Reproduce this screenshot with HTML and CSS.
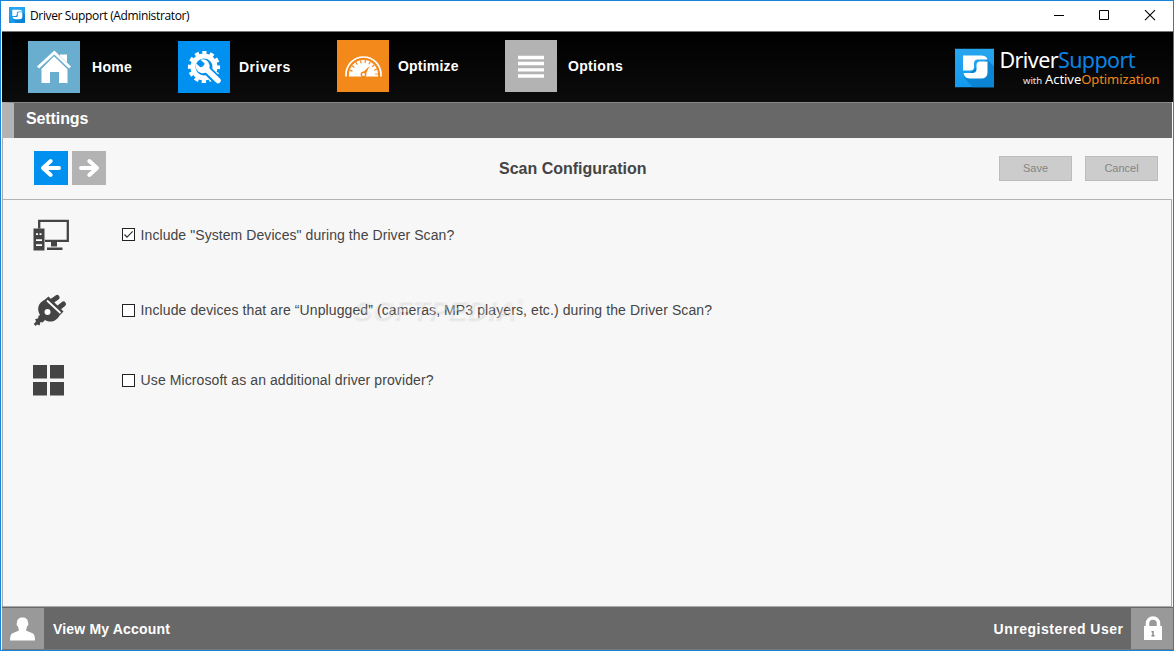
FILE: index.html
```html
<!DOCTYPE html>
<html lang="en">
<head>
<meta charset="utf-8">
<title>Driver Support</title>
<link rel="stylesheet" href="styles.css">
</head>
<body>
<svg class="defs" width="0" height="0">
  <defs>
    <linearGradient id="tile" x1="0" y1="0" x2="0" y2="1"><stop offset="0" stop-color="#28a6ee"/><stop offset="1" stop-color="#129af0"/></linearGradient>
    <symbol id="brand" viewBox="0 0 39 39">
      <rect width="39" height="39" fill="url(#tile)"/>
      <path d="M32 11 39 18V39H18L9 29Z" fill="#0b84d4"/>
      <path d="M8 7H26Q31.500 7 32.500 11H23Q19 11 19 15V18.500Q19 22 15.500 22H8Z" fill="#fff"/>
      <path d="M32.500 13V24Q32.500 30 26 30H15Q9.500 30 8.500 24.500H17.500Q21.500 24.500 21.500 20.500V16.500Q21.500 13 25 13Z" fill="#fff"/>
    </symbol>
  </defs>
</svg>
<div class="window">
  <header class="titlebar">
    <svg class="app-icon" width="16" height="16"><use href="#brand"/></svg>
    <span class="title">Driver Support (Administrator)</span>
    <svg class="controls" width="104" height="14" viewBox="0 0 104 14" fill="none" stroke="#000">
      <path d="M1 7.500H11M46.500 2.500H55.500V11.500H46.500Z"/><path d="M92 2.200 102 12.200M102 2.200 92 12.200" stroke-width="1.100"/>
    </svg>
  </header>
  <nav class="nav">
    <a class="item home"><svg class="tile" viewBox="0 0 52 52"><g fill="#fff"><path d="M32 13.500H39V25L32 18Z"/><path d="M26 15 39.500 28V42H31V31H22V42H13.500V28Z"/></g><path d="M10 27.500 26 12 42 27.500" fill="none" stroke="#69aecf" stroke-width="4.500"/><path d="M10 26.500 26.300 11.500 42 26.500" fill="none" stroke="#fff" stroke-width="3"/></svg><span>Home</span></a>
    <a class="item drivers"><svg class="tile" viewBox="0 0 52 52"><circle cx="26" cy="26" r="14.300" fill="none" stroke="#fff" stroke-width="3.600" stroke-dasharray="4.200 3.288" stroke-dashoffset="2.100"/><circle cx="26" cy="26" r="11" fill="none" stroke="#fff" stroke-width="5"/><path d="M28 28 40 40" stroke="#0090f0" stroke-width="9.500" stroke-linecap="butt"/><path d="M27 27 40 39.500" stroke="#fff" stroke-width="5.500" stroke-linecap="round"/><path d="M22.200 18.800A7 7 0 1 1 18.300 22.600L22.300 26.300 26 25.300 26.500 22.200Z" fill="#fff"/></svg><span>Drivers</span></a>
    <a class="item optimize"><svg class="tile" viewBox="0 0 52 52"><path d="M9 36.500V34.500A17.300 17.300 0 0 1 44 34.500V36.500" fill="none" stroke="#fff" stroke-width="1.700"/><path d="M12 36.500V34.500A14.500 14.500 0 0 1 41 34.500V36.500Z" fill="#fff"/><path d="M13.500 34.500A13 13 0 0 1 39.500 34.500" fill="none" stroke="#f3881b" stroke-width="3" stroke-dasharray="1.200 3.340" stroke-dashoffset="-3.300"/><path d="M24.300 34 32.500 26 28.500 35Z" fill="#f3881b"/><circle cx="26.500" cy="34.500" r="2.900" fill="#f3881b"/><circle cx="26.500" cy="34.500" r="1.500" fill="#fff"/></svg><span>Optimize</span></a>
    <a class="item options"><svg class="tile" viewBox="0 0 52 52"><path d="M13 17.500H39M13 23.500H39M13 29.800H39M13 36H39" stroke="#fff" stroke-width="3.300"/></svg><span>Options</span></a>
    <div class="logo">
      <svg width="210" height="46" viewBox="0 0 210 46"><use href="#brand" x="0" y="3.500" width="39" height="39"/>
        <text x="44.500" y="22.500" font-size="21.500" textLength="136" fill="#fff">Driver<tspan fill="#0b84e4">Support</tspan></text>
        <text x="68" y="39" font-size="9.500" textLength="19" fill="#eee">with</text>
        <text x="90" y="39" font-size="13" textLength="114.500" fill="#fff">Active<tspan fill="#f3881b">Optimization</tspan></text>
      </svg>
    </div>
  </nav>
  <div class="section"><h1>Settings</h1></div>
  <div class="toolbar">
    <div class="arrows">
      <svg class="arrow back" viewBox="0 0 34 34"><path d="M25 17H9M16.700 10 9 17 16.700 24"/></svg>
      <svg class="arrow next" viewBox="0 0 34 34"><path d="M9 17H25M17.300 10 25 17 17.300 24"/></svg>
    </div>
    <h2>Scan Configuration</h2>
    <div class="actions"><button disabled>Save</button><button disabled>Cancel</button></div>
  </div>
  <main class="content">
    <div class="row system">
      <svg class="row-icon" width="38" height="34" viewBox="0 0 38 34"><g transform="translate(0 .6)"><path d="M6.200 11V3.200H34.800V23.200H12" fill="none" stroke="#444" stroke-width="2.300"/><path d="M.500 11H11.500V33H.500ZM18 24H24V29H18ZM14 30H29.500V32.500H14Z" fill="#444"/><path d="M3 16.500H5M6.500 16.500H8.500M3 22.500H9M3 27.500H9" stroke="#fff" stroke-width="1.700"/></g></svg>
      <label><span class="check"><svg width="11" height="11" viewBox="0 0 11 11"><path d="M1.500 5.500 4 8.200 9.700 2.300" fill="none" stroke="#333" stroke-width="1.200"/></svg></span><span class="text t1">Include "System Devices" during the Driver Scan?</span></label>
    </div>
    <div class="row unplugged">
      <svg class="row-icon" width="38" height="34" viewBox="0 0 38 34"><g transform="translate(0 1)"><path d="M12 5.500 15.500 2.500 30.500 17.500 27 21C23 28 17 29 12 26L9.500 28.500 7.500 28 6.500 31.500 4 30.500 2.500 32 .8 30 3 27.500 2.200 25 5 24.500 5.500 22 7 21C3.500 15 5 9 12 5.500Z" fill="#444"/><path d="M19 7 24 3.500M25.500 14 30.500 10" stroke="#444" stroke-width="5" stroke-linecap="round"/><path d="M14 6.500 27.500 19" stroke="#fff" stroke-width="1.800"/><circle cx="14.500" cy="18" r="3" fill="#fff"/></g></svg>
      <label><span class="check"></span><span class="text t2">Include devices that are “Unplugged” (cameras, MP3 players, etc.) during the Driver Scan?</span></label>
      <span class="watermark">SOFTPEDIA<small>®</small></span>
    </div>
    <div class="row microsoft">
      <svg class="row-icon" width="38" height="34" viewBox="0 0 38 34"><path d="M0 2H14V15.500H0ZM17 2H31V15.500H17ZM0 19H14V32.500H0ZM17 19H31V32.500H17Z" fill="#444"/></svg>
      <label><span class="check"></span><span class="text t3">Use Microsoft as an additional driver provider?</span></label>
    </div>
  </main>
  <footer class="footer">
    <svg class="foot-icon" viewBox="0 0 42 41"><path d="M20.500 9.500C24 9.500 26 11.500 26 14.500C27 16 26 18 25 18.500L24 22.500 31 25.500Q33 27 33 32.500H8Q8 27 10 25.500L17 22.500 16 18.500C15 18 14 16 15 14.500C15 11.500 17 9.500 20.500 9.500Z" fill="#fff"/></svg>
    <span class="account">View My Account</span>
    <span class="user">Unregistered User</span>
    <svg class="foot-icon lock" viewBox="0 0 42 41"><path d="M16.500 18V15.500A5.500 5.500 0 0 1 27.500 15.500V18" fill="none" stroke="#fff" stroke-width="3.500"/><path d="M13 18H31V32H13Z" fill="#fff"/><path d="M20.500 23H22.700V27H23.500V28.500H20.500V27H21.300V24.500H20.500Z" fill="#888"/></svg>
  </footer>
</div>
</body>
</html>
```
FILE: styles.css
```css
* { box-sizing: border-box; }
body { margin: 0; font-family: "Liberation Sans", Arial, sans-serif; }
h1, h2 { margin: 0; font-size: 16px; line-height: 18px; }
.defs { display: block; }
.window { width: 1174px; height: 651px; border: 1px solid #1883d7; display: flex; flex-direction: column; background: #f7f7f7; overflow: hidden; }
.titlebar { height: 30px; flex: none; display: flex; align-items: center; padding: 0 16px 2px 8px; background: #fff; }
.app-icon { flex: none; }
.title { margin-left: 5px; font: 12px "Open Sans", sans-serif; letter-spacing: -.36px; color: #000; white-space: nowrap; }
.controls { margin-left: auto; }
.nav { height: 71px; flex: none; display: flex; margin-left: 1px; border-top: 1px solid #777; background: linear-gradient(#000, #0c0c0c); padding-left: 26px; }
.item { display: flex; align-items: center; height: 52px; margin-top: 9px; color: #fff; font-weight: bold; font-size: 14px; letter-spacing: .32px; }
.tile { width: 52px; height: 52px; flex: none; }
.home { width: 150px; gap: 12px; }
.drivers { width: 159px; gap: 9px; }
.drivers span { letter-spacing: .5px; }
.optimize { width: 168px; gap: 9px; margin-top: 8px; }
.optimize span { letter-spacing: .2px; }
.options { width: 150px; gap: 11px; margin-top: 8px; }
.home .tile { background: #69aecf; }
.drivers .tile { background: #0090f0; }
.optimize .tile { background: #f3881b; }
.options .tile { background: #b3b3b3; }
.logo { margin: 13px 8px 0 auto; height: 46px; font-family: "Noto Sans", sans-serif; }
.section { height: 36px; flex: none; margin: 0 1px; padding: 7px 0 0 12px; border-top: 1px solid #888; border-left: 12px solid #b3b3b3; background: #686868; color: #fff; }
.section h1 { letter-spacing: -.1px; }
.toolbar { height: 62px; flex: none; margin: 0 1px; border-left: 1px solid #aaa; border-bottom: 1px solid #b3b3b3; display: grid; grid-template-columns: 1fr auto 1fr; align-items: center; padding: 0 14px 0 31px; }
.toolbar h2 { color: #444; margin: 0 22px 0 -22px; }
.arrows { display: flex; gap: 4px; margin-top: -1px; }
.arrow { width: 34px; height: 34px; fill: none; stroke: #fff; stroke-width: 4; stroke-linecap: round; stroke-linejoin: round; }
.back { background: #0090f0; }
.next { background: #b3b3b3; }
.actions { display: flex; gap: 13px; justify-content: flex-end; }
.toolbar h2 { position: static; transform: none; }
.actions button { width: 73px; height: 25px; padding: 0 0 1px; border: 1px solid #bcbcbc; background: #ccc; color: #858585; font: 11px "Liberation Sans", Arial, sans-serif; }
.toolbar { grid-template-columns: 458px auto 1fr; }
.toolbar h2 { margin: 0 0 0 7px; }
.content { flex: 1; margin: 0 1px; border-left: 1px solid #aaa; border-right: 1px solid #aaa; border-bottom: 1px solid #aaa; padding: 17px 0 0 30px; }
.row { height: 34px; display: flex; align-items: center; position: relative; }
.system .text { position: relative; top: 1px; }
.unplugged { margin-top: 42px; }
.microsoft { margin-top: 36px; }
.row-icon { flex: none; margin-right: 51px; }
.row label { display: flex; align-items: center; gap: 5.6px; }
.check { width: 13px; height: 13px; flex: none; border: 1px solid #222; background: #fff; display: flex; }
.text { font-size: 14px; line-height: 18px; color: #444; white-space: nowrap; }
.t1 { letter-spacing: .07px; }
.t2 { letter-spacing: .1px; }
.t3 { letter-spacing: .09px; }
.watermark { position: absolute; left: 320px; top: 3px; font: italic bold 28px/28px "Liberation Sans", Arial, sans-serif; letter-spacing: .3px; color: rgba(255, 255, 255, .35); text-shadow: 1px 2px 2px rgba(0, 0, 0, .08); }
.watermark small { font-size: 9px; vertical-align: top; line-height: 9px; }
.footer { height: 43px; flex: none; margin-left: 1px; display: flex; align-items: center; background: #686868; border-bottom: 1px solid #777; border-top: 1px solid #686868; color: #fff; font-size: 14px; font-weight: bold; letter-spacing: .5px; }
.foot-icon { width: 42px; height: 41px; flex: none; background: #999; }
.account { margin-left: 9px; letter-spacing: .18px; }
.user { margin-left: auto; margin-right: 7.5px; }
```
